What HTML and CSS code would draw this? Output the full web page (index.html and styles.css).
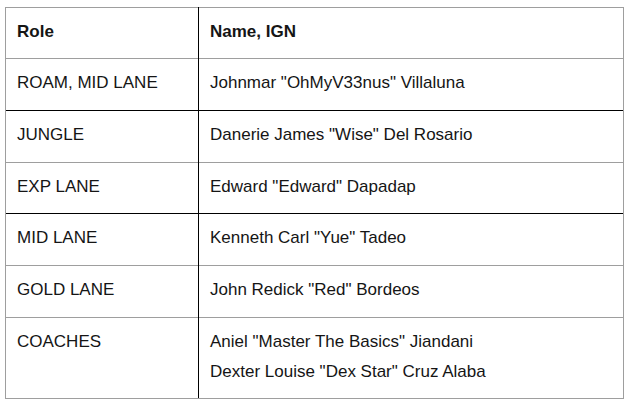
FILE: index.html
```html
<!DOCTYPE html>
<html>
<head>
<meta charset="utf-8">
<link rel="stylesheet" href="styles.css">
</head>
<body>
<div class="wrap">
<table class="roster">
  <tr class="head">
    <td class="role">Role</td>
    <td class="name">Name, IGN</td>
  </tr>
  <tr>
    <td class="role">ROAM, MID LANE</td>
    <td class="name">Johnmar "OhMyV33nus" Villaluna</td>
  </tr>
  <tr class="dark">
    <td class="role">JUNGLE</td>
    <td class="name">Danerie James "Wise" Del Rosario</td>
  </tr>
  <tr>
    <td class="role">EXP LANE</td>
    <td class="name">Edward "Edward" Dapadap</td>
  </tr>
  <tr class="dark">
    <td class="role">MID LANE</td>
    <td class="name">Kenneth Carl "Yue" Tadeo</td>
  </tr>
  <tr>
    <td class="role">GOLD LANE</td>
    <td class="name">John Redick "Red" Bordeos</td>
  </tr>
  <tr class="last">
    <td class="role">COACHES</td>
    <td class="name">
      <div class="line">Aniel "Master The Basics" Jiandani</div>
      <div class="line">Dexter Louise "Dex Star" Cruz Alaba</div>
    </td>
  </tr>
</table>
</div>
</body>
</html>
```

FILE: styles.css
```css
html, body {
  margin: 0;
  padding: 0;
  background: #fff;
}
.wrap {
  padding: 7px 0 0 5px;
}
.roster {
  border-collapse: collapse;
  width: 619px;
  font-family: "Liberation Sans", Arial, sans-serif;
  font-size: 17px;
  line-height: 25px;
  color: #151515;
}
.roster td {
  border-top: 1px solid #9e9e9e;
  border-left: 1px solid #9e9e9e;
  border-right: 1px solid #9e9e9e;
  border-bottom: none;
  padding: 11px 11px 14.8px 11px;
  vertical-align: top;
  height: 25px;
}
.roster td.role {
  width: 170px;
  border-right-color: #000;
}
.roster td.name {
  border-left-color: #000;
}
.roster .head td {
  font-weight: bold;
  padding-bottom: 14px;
}
.roster .dark td {
  border-top-color: #000;
}
.roster .last td {
  border-bottom: 1px solid #9e9e9e;
  padding-bottom: 14px;
}
.line + .line {
  margin-top: 5px;
}
```
